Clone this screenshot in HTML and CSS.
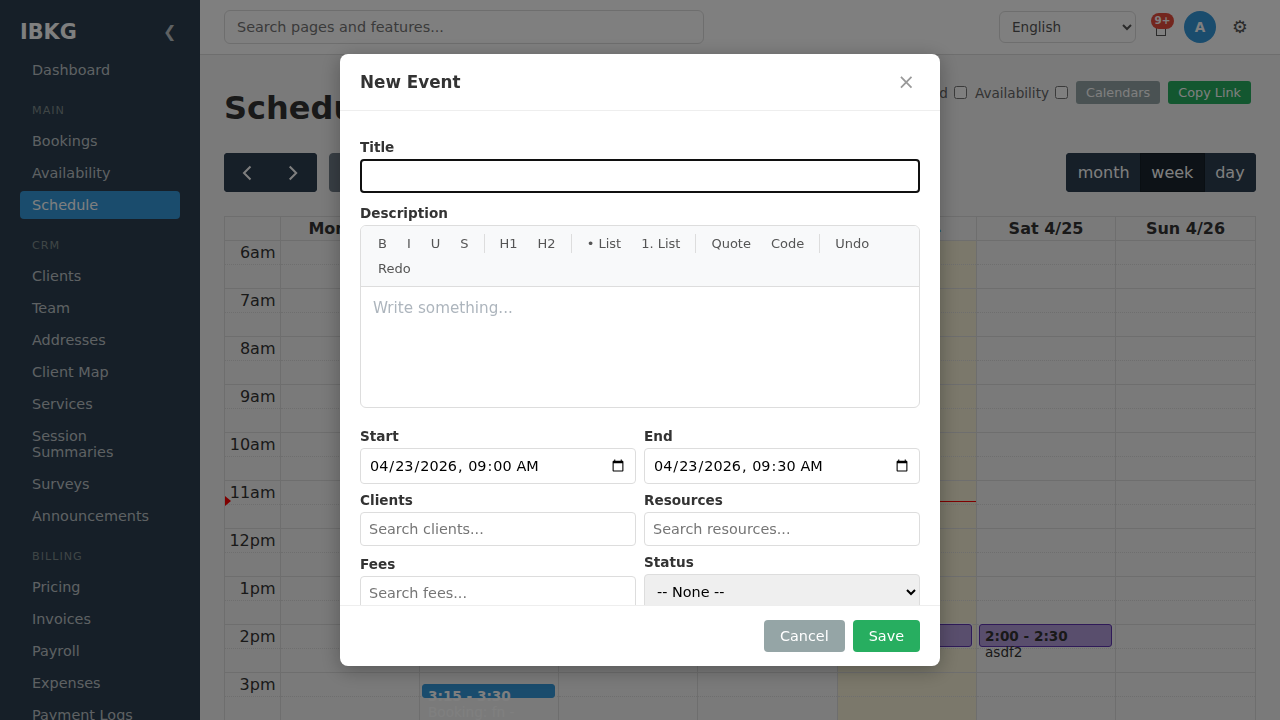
FILE: index.html
```html
<!DOCTYPE html>
<html lang="en">
<head>
    <meta charset="UTF-8">
    <meta name="viewport" content="width=device-width, initial-scale=1.0">
    <title>Schedule - IBKG</title>
    <link rel="stylesheet" href="styles.css">
</head>
<body>
    <div class="app">
        <nav class="sidebar">
            <div class="brand"><span>IBKG</span><button class="collapse">❮</button></div>
            <a class="nav-link">Dashboard</a>
            <div class="nav-label">Main</div>
            <a class="nav-link">Bookings</a>
            <a class="nav-link">Availability</a>
            <a class="nav-link active">Schedule</a>
            <div class="nav-label">CRM</div>
            <a class="nav-link">Clients</a>
            <a class="nav-link">Team</a>
            <a class="nav-link">Addresses</a>
            <a class="nav-link">Client Map</a>
            <a class="nav-link">Services</a>
            <a class="nav-link">Session Summaries</a>
            <a class="nav-link">Surveys</a>
            <a class="nav-link">Announcements</a>
            <div class="nav-label">Billing</div>
            <a class="nav-link">Pricing</a>
            <a class="nav-link">Invoices</a>
            <a class="nav-link">Payroll</a>
            <a class="nav-link">Expenses</a>
            <a class="nav-link">Payment Logs</a>
        </nav>
        <div class="main">
            <header class="topbar">
                <input class="search" type="text" placeholder="Search pages and features...">
                <div class="topbar-right">
                    <select class="language"><option>English</option></select>
                    <div class="bell"><span class="bell-icon"></span><span class="badge">9+</span></div>
                    <div class="avatar">A</div>
                    <div class="gear">⚙</div>
                </div>
            </header>
            <div class="content">
                <div class="page-head">
                    <h1>Schedule</h1>
                    <div class="page-actions">
                        <label>Blocked <input type="checkbox"></label>
                        <label>Availability <input type="checkbox"></label>
                        <button class="btn-sm grey">Calendars</button>
                        <button class="btn-sm green">Copy Link</button>
                    </div>
                </div>
                <div class="cal-toolbar">
                    <div class="cal-left">
                        <div class="btn-group">
                            <button class="cal-btn arrow"><svg width="24" height="24" viewBox="0 0 24 24"><path d="M15.5 5.5 9 12 15.5 18.5"/></svg></button>
                            <button class="cal-btn arrow"><svg width="24" height="24" viewBox="0 0 24 24"><path d="M8.7 5.5 15.2 12 8.7 18.5"/></svg></button>
                        </div>
                        <button class="cal-btn today-btn">today</button>
                    </div>
                    <div class="btn-group">
                        <button class="cal-btn">month</button>
                        <button class="cal-btn selected">week</button>
                        <button class="cal-btn">day</button>
                    </div>
                </div>
                <div class="calendar" id="calendar">
                    <div class="cal-row cal-head">
                        <div></div>
                        <div>Mon 4/20</div>
                        <div>Tue 4/21</div>
                        <div>Wed 4/22</div>
                        <div>Thu 4/23</div>
                        <div class="today-head">Fri 4/24</div>
                        <div>Sat 4/25</div>
                        <div>Sun 4/26</div>
                    </div>
                </div>
            </div>
        </div>
    </div>

    <div class="overlay">
        <div class="modal">
            <div class="modal-header">
                <h2>New Event</h2>
                <button class="close">×</button>
            </div>
            <div class="modal-body">
                <div class="field">
                    <label>Title</label>
                    <input class="control title-input" type="text">
                </div>
                <div class="field">
                    <label>Description</label>
                    <div class="editor">
                        <div class="editor-toolbar">
                            <button>B</button>
                            <button>I</button>
                            <button>U</button>
                            <button>S</button>
                            <span class="sep"></span>
                            <button>H1</button>
                            <button>H2</button>
                            <span class="sep"></span>
                            <button>• List</button>
                            <button>1. List</button>
                            <span class="sep"></span>
                            <button>Quote</button>
                            <button>Code</button>
                            <span class="sep"></span>
                            <button>Undo</button>
                            <button>Redo</button>
                        </div>
                        <div class="editor-area">Write something...</div>
                    </div>
                </div>
                <div class="field-grid">
                    <div>
                        <label>Start</label>
                        <input class="control date" type="datetime-local" value="2026-04-23T09:00">
                    </div>
                    <div>
                        <label>End</label>
                        <input class="control date" type="datetime-local" value="2026-04-23T09:30">
                    </div>
                    <div>
                        <label>Clients</label>
                        <input class="control" type="text" placeholder="Search clients...">
                    </div>
                    <div>
                        <label>Resources</label>
                        <input class="control" type="text" placeholder="Search resources...">
                    </div>
                    <div>
                        <label>Fees</label>
                        <input class="control" type="text" placeholder="Search fees...">
                    </div>
                    <div>
                        <label>Status</label>
                        <select class="control status"><option>-- None --</option></select>
                    </div>
                </div>
            </div>
            <div class="modal-footer">
                <button class="btn grey">Cancel</button>
                <button class="btn green">Save</button>
            </div>
        </div>
    </div>

    <script>
        const calendar = document.getElementById('calendar');
        const hours = ['6am', '7am', '8am', '9am', '10am', '11am', '12pm', '1pm', '2pm', '3pm'];
        const todayColumn = 5;

        // key is hour + day column
        const events = {
            '2pm-5': '<div class="event purple"></div>',
            '2pm-6': '<div class="event purple"><b>2:00 - 2:30</b><br>asdf2</div>',
            '3pm-2': '<div class="event blue"><b>3:15 - 3:30</b><br>Booking: fn -</div>'
        };

        hours.forEach(hour => {
            const row = document.createElement('div');
            row.className = 'cal-row hour';
            let html = '<div class="axis"><span>' + hour + '</span>' + (hour === '11am' ? '<i class="now-arrow"></i>' : '') + '</div>';
            for (let day = 1; day <= 7; day++) {
                html += '<div class="' + (day === todayColumn ? 'today' : '') + '">';
                html += events[hour + '-' + day] || '';
                if (hour === '11am' && day === todayColumn) {
                    html += '<i class="now-line"></i>';
                }
                html += '</div>';
            }
            row.innerHTML = html;
            calendar.appendChild(row);
        });
    </script>
</body>
</html>
```
FILE: styles.css
```css
* {
    box-sizing: border-box;
}
body {
    margin: 0;
    height: 100vh;
    overflow: hidden;
    background: #f5f5f5;
    color: #333;
    font-family: 'DejaVu Sans', sans-serif;
}
button, input, select {
    font-family: inherit;
}
.app {
    display: flex;
    height: 100vh;
}

/* sidebar */
.sidebar {
    width: 200px;
    flex-shrink: 0;
    padding: 20px;
    background: #2c3e50;
    overflow: hidden;
}
.brand {
    display: flex;
    justify-content: space-between;
    align-items: center;
    height: 24px;
    margin-bottom: 12px;
    color: #fff;
    font-size: 20.8px;
    font-weight: bold;
}
.collapse {
    padding: 0 3.5px 2px;
    border: none;
    background: none;
    color: #bdc3c7;
    font-size: 16px;
}
.nav-link {
    display: block;
    margin-bottom: 4px;
    padding: 6px 12px;
    border-radius: 4px;
    color: #bdc3c7;
    font-size: 14.4px;
    line-height: 16px;
}
.nav-link.active {
    background: #3498db;
    color: #fff;
}
.nav-label {
    margin: 20px 12px 10px;
    color: #7f8c8d;
    font-size: 11.2px;
    line-height: 13px;
    letter-spacing: 1px;
    text-transform: uppercase;
}

/* top bar */
.main {
    flex: 1;
    min-width: 0;
}
.topbar {
    display: flex;
    justify-content: space-between;
    align-items: center;
    height: 55px;
    padding: 0 24px;
    background: #fff;
    border-bottom: 1px solid #ddd;
}
.search {
    width: 480px;
    height: 34px;
    padding: 0 12px;
    border: 1px solid #ddd;
    border-radius: 6px;
    background: #fff;
    font-size: 14.4px;
}
.topbar-right {
    display: flex;
    align-items: center;
}
.language {
    width: 137px;
    height: 32px;
    padding: 0 8px;
    border: 1px solid #ddd;
    border-radius: 6px;
    background: #fff;
    color: #555;
    font-size: 13.6px;
}
.bell {
    position: relative;
    width: 48px;
    height: 32px;
}
.bell-icon {
    position: absolute;
    left: 20px;
    top: 10px;
    width: 10px;
    height: 15px;
    border: 1px solid #555;
}
.badge {
    position: absolute;
    left: 15px;
    top: 2px;
    width: 23px;
    height: 16px;
    border-radius: 8px;
    background: #e74c3c;
    color: #fff;
    font-size: 10.4px;
    font-weight: bold;
    line-height: 15px;
    text-align: center;
}
.avatar {
    width: 32px;
    height: 32px;
    border-radius: 50%;
    background: #3498db;
    color: #fff;
    font-size: 13.6px;
    font-weight: bold;
    line-height: 32px;
    text-align: center;
}
.gear {
    width: 40px;
    padding-left: 8px;
    color: #555;
    text-align: center;
    font-size: 17.6px;
}

/* page header */
.content {
    padding: 25px 24px 0;
}
.page-head {
    display: flex;
    justify-content: space-between;
    height: 73px;
}
h1 {
    margin: 9px 0 0;
    font-size: 32px;
    line-height: 38px;
}
.page-actions {
    display: flex;
    align-items: center;
    gap: 8px;
    height: 25px;
    padding-right: 5px;
    color: #666;
    font-size: 13.6px;
}
.page-actions label {
    display: flex;
    align-items: center;
    gap: 6px;
}
.page-actions input {
    margin: 0;
}
.btn-sm {
    height: 23px;
    padding: 0 10px;
    border: none;
    border-radius: 3px;
    color: #fff;
    font-size: 12.8px;
}
.grey {
    background: #95a5a6;
}
.green {
    background: #27ae60;
}

/* calendar */
.cal-toolbar {
    display: flex;
    justify-content: space-between;
    margin-bottom: 24px;
}
.cal-left {
    display: flex;
    gap: 12px;
}
.btn-group {
    display: flex;
    border-radius: 4px;
    overflow: hidden;
}
.cal-btn {
    height: 39px;
    padding: 0 10.4px;
    border: 1px solid #2c3e50;
    background: #2c3e50;
    color: #fff;
    font-size: 16px;
    line-height: 24px;
}
.btn-group .cal-btn + .cal-btn {
    margin-left: -1px;
}
.cal-btn.arrow {
    display: flex;
    align-items: center;
    width: 47px;
}
.arrow svg {
    fill: none;
    stroke: #fff;
    stroke-width: 2;
}
.cal-btn.selected {
    position: relative;
    z-index: 1;
    background: #1a252f;
    border-color: #151e27;
}
.today-btn {
    border-radius: 4px;
    opacity: 0.65;
}
.calendar {
    border-left: 1px solid #ddd;
    border-top: 1px solid #ddd;
}
.cal-row {
    display: grid;
    grid-template-columns: 56px 139px 139px 139px 140px 139px 139px 140px;
    height: 48px;
}
.cal-row > div {
    position: relative;
    border-right: 1px solid #ddd;
    border-bottom: 1px solid #ddd;
}
.cal-row.cal-head {
    height: 24px;
    font-weight: bold;
    line-height: 23px;
    text-align: center;
}
.today-head {
    color: #3498db;
}
.hour > div::before {
    content: '';
    display: block;
    height: 23px;
    border-bottom: 1px dotted #ddd;
}
.hour > .today {
    background: rgba(255, 220, 40, 0.15);
}
.axis span {
    position: absolute;
    right: 4.5px;
    top: 2px;
    line-height: 20px;
}
.event {
    position: absolute;
    left: 2px;
    right: 3px;
    top: -1px;
    z-index: 1;
    padding: 3px 5px;
    border-radius: 3px;
    box-shadow: 0 0 0 1px #f5f5f5;
    font-size: 13.6px;
    line-height: 16px;
    white-space: nowrap;
}
.today .event {
    right: 4px;
}
.event.purple {
    height: 23px;
    border: 1px solid #5e35b1;
    background: #b39ddb;
}
.event.blue {
    top: 11px;
    height: 14px;
    border: 1px solid #3498db;
    background: #3498db;
    color: #fff;
}
.now-line {
    position: absolute;
    left: 0;
    right: 0;
    top: 20px;
    border-top: 1px solid red;
}
.now-arrow {
    position: absolute;
    left: 0;
    top: 15px;
    border: 5px solid transparent;
    border-left: 6px solid red;
    border-right: 0;
}

/* modal */
.overlay {
    position: fixed;
    inset: 0;
    z-index: 1000;
    display: flex;
    align-items: center;
    justify-content: center;
    background: rgba(0, 0, 0, 0.5);
}
.modal {
    display: flex;
    flex-direction: column;
    width: 600px;
    height: 85vh;
    border-radius: 8px;
    background: #fff;
    box-shadow: 0 4px 20px rgba(0, 0, 0, 0.3);
    overflow: hidden;
}
.modal-header {
    display: flex;
    justify-content: space-between;
    align-items: center;
    flex-shrink: 0;
    height: 57px;
    padding: 0 20px;
    border-bottom: 1px solid #eee;
}
.modal-header h2 {
    margin: 0;
    font-size: 16.8px;
}
.close {
    padding: 0 5px;
    border: none;
    background: none;
    color: #999;
    font-size: 20.8px;
}
.modal-body {
    flex: 1;
    min-height: 0;
    padding: 28px 20px 20px;
    overflow: hidden;
}
.modal-body label {
    display: block;
    margin-bottom: 4px;
    font-size: 13.6px;
    font-weight: bold;
    line-height: 16px;
}
.field {
    margin-bottom: 12px;
}
.control {
    display: block;
    width: 100%;
    height: 34px;
    padding: 0 8px;
    border: 1px solid #ddd;
    border-radius: 4px;
    background: #fff;
    font-size: 14.4px;
}
.title-input {
    border: 2px solid #101010;
}
.control.date {
    height: 36px;
}
.control.status {
    height: 36px;
    background: #efefef;
}
.editor {
    border: 1px solid #ddd;
    border-radius: 6px;
    overflow: hidden;
}
.editor-toolbar {
    display: flex;
    flex-wrap: wrap;
    gap: 2px;
    padding: 6px 8px;
    border-bottom: 1px solid #ddd;
    background: #f8f9fa;
}
.editor-toolbar button {
    height: 23px;
    padding: 3px 8px;
    border: 1px solid transparent;
    background: none;
    color: #555;
    font-size: 13px;
    line-height: 15px;
}
.sep {
    width: 1px;
    margin: 2px 4px;
    background: #ddd;
}
.editor-area {
    height: 120px;
    padding: 12px;
    color: #adb5bd;
    font-size: 15.2px;
    line-height: 18px;
}
.field-grid {
    display: grid;
    grid-template-columns: 1fr 1fr;
    align-items: end;
    gap: 8px;
    margin-top: 20px;
}
.modal-footer {
    display: flex;
    justify-content: flex-end;
    gap: 8px;
    flex-shrink: 0;
    padding: 14px 20px;
    border-top: 1px solid #eee;
}
.btn {
    height: 32px;
    padding: 0 16px;
    border: none;
    border-radius: 4px;
    color: #fff;
    font-size: 14.4px;
}
```
